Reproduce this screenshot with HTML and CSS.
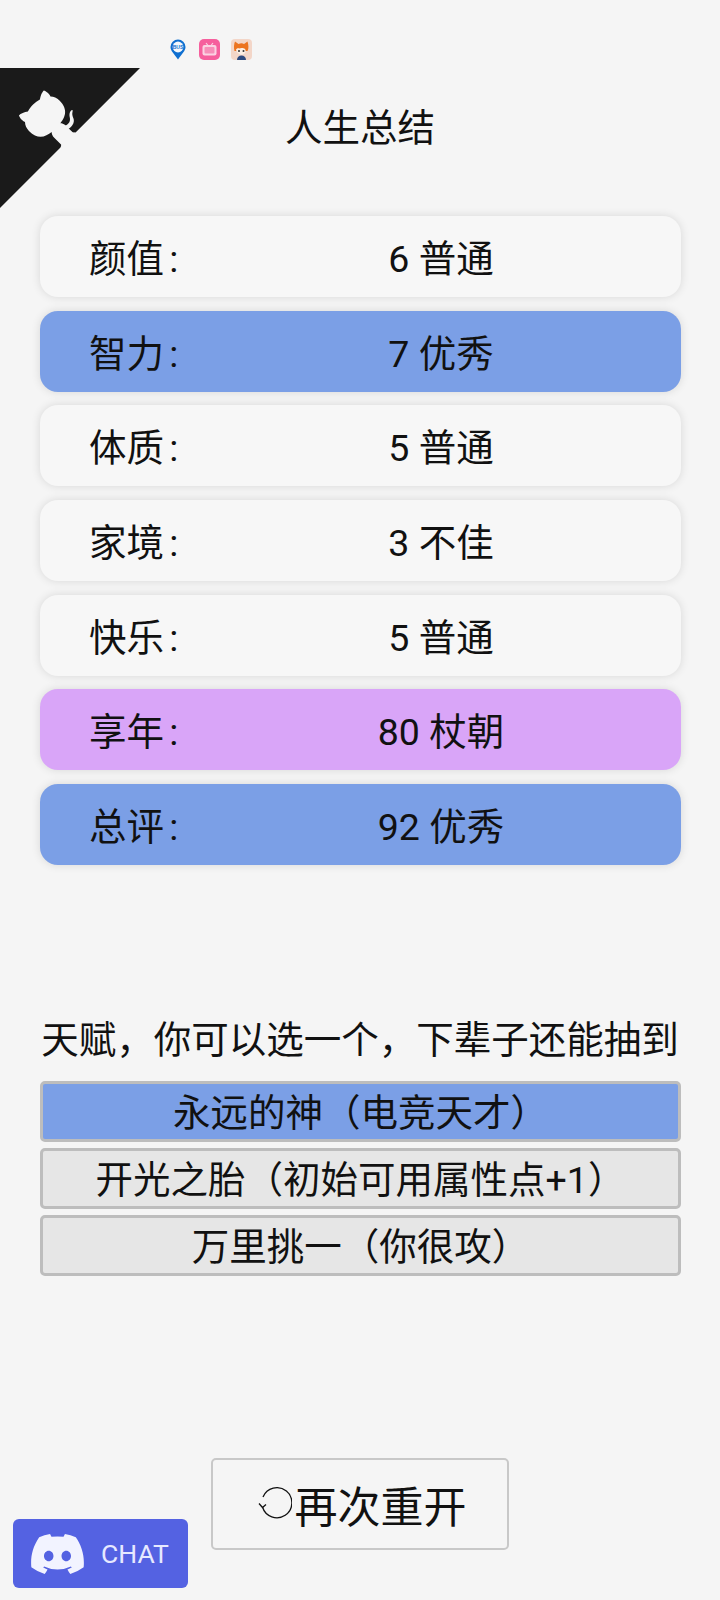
FILE: index.html
```html
<!DOCTYPE html>
<html lang="zh-CN">
<head>
    <meta charset="UTF-8">
    <meta name="viewport" content="width=device-width, initial-scale=1.0">
    <title>人生总结</title>
    <link rel="stylesheet" href="styles.css">
</head>
<body>
    <div class="status-icons">
        <svg class="icon-pin" viewBox="0 0 16 21">
            <path d="M8 0.5a7.5 7.5 0 0 1 7.5 7.5c0 4-3.6 6.8-7.5 12.5C4.100 14.800 0.500 12 0.500 8A7.500 7.500 0 0 1 8 0.500z" fill="#0f6fd0"/>
            <circle cx="8" cy="8" r="5.400" fill="#f4f8fc"/>
            <text x="8" y="10" class="pin-text">BUS</text>
        </svg>
        <svg class="icon-tv" viewBox="0 0 21 21">
            <rect width="21" height="21" rx="5" fill="#f65f9d"/>
            <path d="M7 4l2 2.500M14 4l-2 2.500" stroke="#fbd3e3" stroke-width="1.200"/>
            <rect x="3.500" y="6" width="14" height="10.500" rx="2" fill="#fbd3e3"/>
            <rect x="5.500" y="8" width="10" height="6.500" rx="1" fill="#f78fb9"/>
        </svg>
        <svg class="icon-fox" viewBox="0 0 21 21">
            <rect width="21" height="21" rx="4" fill="#f3d6c8"/>
            <path d="M3.500 12c-1-3-0.500-7 0.500-9.500l3.500 2.500c2-1 4-1 5.500 0l3.500-2.500c1 3 1.500 7 0 9.500z" fill="#ec7420"/>
            <path d="M5 11c0-1.500 2-2 3.500-1.500 1-0.800 4-0.800 5.500 0.500 1 1 1 3.500-1 5-2 1.300-6 1-8-4z" fill="#fbeee4"/>
            <circle cx="8" cy="12" r="1" fill="#333"/>
            <circle cx="12.500" cy="12" r="1" fill="#333"/>
            <path d="M6 21c0-3 2-4.500 4.500-4.500s4.500 1.500 4.500 4.500z" fill="#2d4a80"/>
        </svg>
    </div>

    <a class="github-corner" href="#">
        <svg viewBox="0 0 250 250">
            <path d="M0,0 L115,115 L130,115 L142,142 L250,250 L250,0 Z" fill="#1a1a1a"/>
            <path d="M128.3,109.0 C113.8,99.7 119.0,89.6 119.0,89.6 C122.0,82.7 120.5,78.6 120.5,78.6 C119.2,72.0 123.4,76.3 123.4,76.3 C127.3,80.9 125.5,87.3 125.5,87.3 C122.9,97.6 130.6,101.9 134.4,103.2" fill="#f5f5f5"/>
            <path d="M115.0,115.0 C114.9,115.1 118.7,116.5 119.8,115.4 L133.7,101.6 C136.9,99.2 139.9,98.4 142.2,98.6 C133.8,88.0 127.5,74.4 143.8,58.0 C148.5,53.4 154.0,51.2 159.7,51.0 C160.3,49.4 163.2,43.6 171.4,40.1 C171.4,40.1 176.1,42.5 178.8,56.2 C183.1,58.6 187.2,61.8 190.9,65.4 C194.5,69.0 197.7,73.2 200.1,77.6 C213.8,80.2 216.3,84.9 216.3,84.9 C212.7,93.1 206.9,96.0 205.4,96.6 C205.1,102.4 203.0,107.8 198.3,112.5 C181.9,128.9 168.3,122.5 157.7,114.1 C157.9,116.9 156.7,120.9 152.7,124.9 L141.0,136.5 C139.8,137.7 141.6,141.9 141.8,141.8 Z" fill="#f5f5f5"/>
        </svg>
    </a>

    <h1 class="titulo">人生总结</h1>

    <ul class="resumo">
        <li class="linha"><span class="rotulo">颜值 :</span><span class="valor">6 普通</span></li>
        <li class="linha azul"><span class="rotulo">智力 :</span><span class="valor">7 优秀</span></li>
        <li class="linha"><span class="rotulo">体质 :</span><span class="valor">5 普通</span></li>
        <li class="linha"><span class="rotulo">家境 :</span><span class="valor">3 不佳</span></li>
        <li class="linha"><span class="rotulo">快乐 :</span><span class="valor">5 普通</span></li>
        <li class="linha roxo"><span class="rotulo">享年 :</span><span class="valor">80 杖朝</span></li>
        <li class="linha azul"><span class="rotulo">总评 :</span><span class="valor">92 优秀</span></li>
    </ul>

    <p class="dica">天赋，你可以选一个，下辈子还能抽到</p>

    <ul class="talentos">
        <li class="talento selecionado">永远的神（电竞天才）</li>
        <li class="talento">开光之胎（初始可用属性点+1）</li>
        <li class="talento">万里挑一（你很攻）</li>
    </ul>

    <button class="reiniciar">
        <svg class="icon-reload" viewBox="0 0 34 34">
            <path d="M4.500 20A15 15 0 1 0 5 10" fill="none" stroke="#111" stroke-width="1.300"/>
            <path d="M1 16.500l3.500 4 3.500-3" fill="none" stroke="#111" stroke-width="1.300"/>
        </svg>再次重开
    </button>

    <a class="chat" href="#">
        <svg class="icon-discord" viewBox="0 0 127.14 96.36">
            <path fill="#f2f3ff" d="M107.7,8.07A105.15,105.15,0,0,0,81.47,0a72.06,72.06,0,0,0-3.36,6.83A97.68,97.68,0,0,0,49,6.83,72.37,72.37,0,0,0,45.64,0,105.89,105.89,0,0,0,19.39,8.09C2.79,32.65-1.71,56.6.54,80.21h0A105.73,105.73,0,0,0,32.71,96.36,77.7,77.7,0,0,0,39.6,85.25a68.42,68.42,0,0,1-10.85-5.18c.91-.66,1.8-1.34,2.66-2a75.57,75.57,0,0,0,64.32,0c.87.71,1.76,1.39,2.66,2a68.68,68.68,0,0,1-10.87,5.19,77,77,0,0,0,6.89,11.1A105.25,105.25,0,0,0,126.6,80.22h0C129.24,52.84,122.09,29.11,107.7,8.07ZM42.45,65.69C36.18,65.69,31,60,31,53s5-12.74,11.43-12.74S54,46,53.89,53,48.84,65.69,42.45,65.69Zm42.24,0C78.41,65.69,73.25,60,73.25,53s5-12.74,11.44-12.74S96.23,46,96.12,53,91.08,65.69,84.69,65.69Z"/>
        </svg>
        <span>CHAT</span>
    </a>
</body>
</html>
```

FILE: styles.css
```css
* {
    box-sizing: border-box;
}

body {
    position: relative;
    width: 720px;
    height: 1600px;
    margin: 0;
    overflow: hidden;
    background: #f5f5f5;
    color: #111;
    font-family: Roboto, "Noto Sans CJK SC", sans-serif;
    font-size: 37.5px;
}

ul {
    list-style: none;
    margin: 0;
    padding: 0;
}

.status-icons {
    display: flex;
    align-items: center;
    height: 24px;
    margin-top: 37px;
    padding-left: 170px;
}

.icon-pin {
    width: 16px;
    height: 21px;
}

.pin-text {
    font-family: "Liberation Sans", sans-serif;
    font-size: 5px;
    font-weight: bold;
    fill: #0f6fd0;
    text-anchor: middle;
}

.icon-tv {
    width: 21px;
    height: 21px;
    margin-left: 13px;
}

.icon-fox {
    width: 21px;
    height: 21px;
    margin-left: 11px;
}

.github-corner {
    position: absolute;
    top: 68px;
    left: 0;
}

.github-corner svg {
    display: block;
    width: 140px;
    height: 140px;
    transform: scaleX(-1);
}

.titulo {
    margin: 0;
    padding-top: 40px;
    height: 155px;
    font-size: 37.5px;
    font-weight: normal;
    line-height: 54px;
    text-align: center;
}

.resumo {
    display: flex;
    flex-direction: column;
    gap: 13.7px;
    margin: 0 39px 0 40px;
}

.linha {
    display: grid;
    grid-template-columns: 161px 1fr;
    align-items: center;
    height: 81px;
    padding: 0 0 2px 49px;
    border-radius: 18px;
    background: #f7f7f7;
    box-shadow: 0 0 10px rgba(0, 0, 0, 0.12);
}

.linha.azul {
    background: #7b9fe6;
}

.linha.roxo {
    background: #d9a5f8;
}

.rotulo {
    word-spacing: -4px;
}

.valor {
    margin-left: -49px;
    text-align: center;
}

.dica {
    margin: 148px 0 0;
    height: 60px;
    line-height: 54px;
    text-align: center;
    white-space: nowrap;
}

.talentos {
    display: flex;
    flex-direction: column;
    gap: 6px;
    margin: 8px 39px 0 40px;
}

.talento {
    height: 61px;
    padding-top: 3px;
    border: 3px solid #bdbdbd;
    border-radius: 5px;
    background: #e6e6e6;
    line-height: 52px;
    text-align: center;
}

.talento.selecionado {
    background: #7b9fe6;
}

.reiniciar {
    display: flex;
    align-items: center;
    justify-content: center;
    width: 298px;
    height: 92px;
    margin: 182px 0 0 211px;
    padding: 0 0 0 4px;
    border: 2px solid #c8c8c8;
    border-radius: 5px;
    background: #f5f5f5;
    color: #111;
    font-family: inherit;
    font-size: 43px;
}

.icon-reload {
    width: 34px;
    height: 34px;
    margin-right: 3px;
}

.chat {
    position: absolute;
    top: 1519px;
    left: 13px;
    display: flex;
    align-items: center;
    width: 175px;
    height: 69px;
    padding-left: 18px;
    border-radius: 6px;
    background: #5462e2;
    color: #e6e9ff;
    font-size: 26.5px;
    text-decoration: none;
}

.icon-discord {
    width: 53px;
    height: 40px;
    margin-right: 17px;
}
```
